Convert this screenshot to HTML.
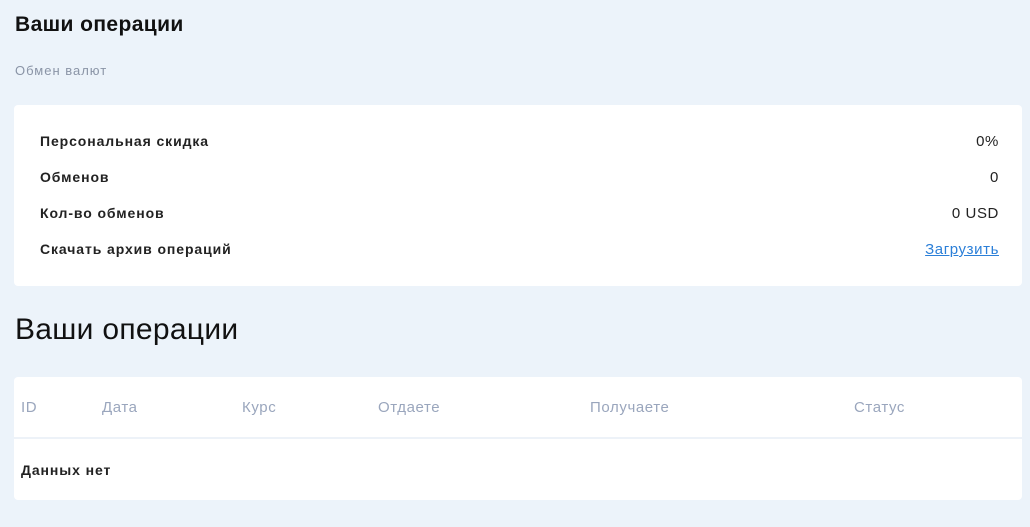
<html><head><style>
body{margin:0;width:1030px;height:527px;background:#ecf3fa;font-family:"Liberation Sans",sans-serif;position:relative;overflow:hidden}
.a{position:absolute;white-space:nowrap}
.card{position:absolute;left:14px;width:1008px;background:#fff;border-radius:4px}
.r{font-size:14px;font-weight:bold;color:#222;letter-spacing:0.9px}
.h{font-size:15px;color:#9aa6bd;letter-spacing:0.6px}
.v{font-size:15px;color:#222;letter-spacing:0.6px}
</style></head><body>
<div class="a" style="left:15px;top:13px;font-size:21px;font-weight:bold;color:#111;letter-spacing:0.4px">Ваши операции</div>
<div class="a" style="left:15px;top:63px;font-size:13px;color:#8a94a6;letter-spacing:1px">Обмен валют</div>
<div class="card" style="top:105px;height:181px"></div>
<div class="a r" style="left:40px;top:133px">Персональная скидка</div>
<div class="a r" style="left:40px;top:169px">Обменов</div>
<div class="a r" style="left:40px;top:205px">Кол-во обменов</div>
<div class="a r" style="left:40px;top:241px">Скачать архив операций</div>
<div class="a v" style="right:31px;top:133px">0%</div>
<div class="a v" style="right:31px;top:169px">0</div>
<div class="a v" style="right:31px;top:205px">0 USD</div>
<div class="a v" style="right:31px;top:241px;color:#2b7fd8;text-decoration:underline">Загрузить</div>
<div class="a" style="left:15px;top:313px;font-size:30px;color:#111;letter-spacing:0.3px">Ваши операции</div>
<div class="card" style="top:377px;height:123px"><div style="position:absolute;left:0;right:0;top:60px;height:2px;background:#edf2f8"></div></div>
<div class="a h" style="left:21px;top:399px">ID</div>
<div class="a h" style="left:102px;top:399px">Дата</div>
<div class="a h" style="left:242px;top:399px">Курс</div>
<div class="a h" style="left:378px;top:399px">Отдаете</div>
<div class="a h" style="left:590px;top:399px">Получаете</div>
<div class="a h" style="left:854px;top:399px">Статус</div>
<div class="a r" style="left:21px;top:462px">Данных нет</div>
</body></html>
